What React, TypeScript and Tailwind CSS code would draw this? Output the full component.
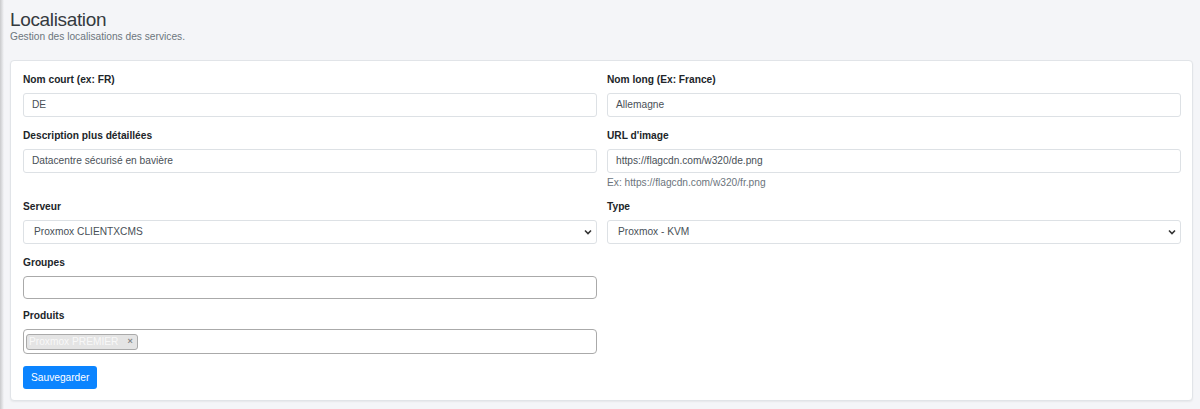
import type { ReactNode } from 'react'

function Label({ children }: { children: ReactNode }) {
  return <label className="block text-[10.2px] leading-[14px] font-bold text-[#212529] mb-[6px]">{children}</label>
}

function Input({ value }: { value: string }) {
  return (
    <div className="h-[24px] border border-[#dde1e5] rounded-[3px] bg-white px-[8px] flex items-center text-[10.2px] text-[#495057]">
      {value}
    </div>
  )
}

function Select({ value }: { value: string }) {
  return (
    <div className="h-[24px] border border-[#dde1e5] rounded-[3px] bg-white pl-[10px] pr-[4px] flex items-center justify-between text-[10.2px] text-[#495057]">
      <span>{value}</span>
      <svg width="8" height="6" viewBox="0 0 8 6" className="text-[#333]">
        <path d="M1 1.5 L4 4.5 L7 1.5" fill="none" stroke="currentColor" strokeWidth="1.6" />
      </svg>
    </div>
  )
}

export default function App() {
  return (
    <div className="min-h-[409px] bg-[#f4f5f8] flex font-['Liberation_Sans',Arial,sans-serif]">
      {/* sidebar shadow */}
      <div className="w-[4px] shrink-0 bg-linear-to-r from-[#c9cacc] to-[#f4f5f8]" />

      <main className="flex-1 pl-[6px] pr-[7px]">
        <div className="pt-[9px]">
          <h1 className="text-[19px] leading-[21px] tracking-[-0.35px] text-[#343a40]">Localisation</h1>
          <p className="text-[10.2px] leading-[13px] text-[#6c757d]">Gestion des localisations des services.</p>
        </div>

        <div className="mt-[17px] bg-white border border-[#e1e4e8] rounded-[4px] shadow-[0_1px_2px_rgba(0,0,0,0.06)] pt-[12px] pb-[11px] pl-[12px] pr-[11px]">
          <div className="grid grid-cols-2 gap-x-[10px]">
            <div className="mb-[12px]">
              <Label>Nom court (ex: FR)</Label>
              <Input value="DE" />
            </div>
            <div className="mb-[12px]">
              <Label>Nom long (Ex: France)</Label>
              <Input value="Allemagne" />
            </div>

            <div className="mb-[12px]">
              <Label>Description plus détaillées</Label>
              <Input value="Datacentre sécurisé en bavière" />
            </div>
            <div className="mb-[11px]">
              <Label>URL d'image</Label>
              <Input value="https://flagcdn.com/w320/de.png" />
              <p className="mt-[4px] text-[10.2px] leading-[12px] text-[#6c757d]">Ex: https://flagcdn.com/w320/fr.png</p>
            </div>

            <div className="mb-[12px]">
              <Label>Serveur</Label>
              <Select value="Proxmox CLIENTXCMS" />
            </div>
            <div className="mb-[12px]">
              <Label>Type</Label>
              <Select value="Proxmox - KVM" />
            </div>

            <div className="mb-[10px]">
              <Label>Groupes</Label>
              <div className="h-[23px] border border-[#aaaaaa] rounded-[4px] bg-white" />
            </div>
            <div />

            <div className="mb-[10px]">
              <Label>Produits</Label>
              <div className="h-[25px] border border-[#aaaaaa] rounded-[4px] bg-white pl-[2px] flex items-center">
                <span className="h-[16px] flex items-center bg-[#e4e4e4] border border-[#aaaaaa] rounded-[3px] pl-[2px] pr-[4px] text-[10.2px] text-[#f8f8f8]">
                  Proxmox PREMIER
                  <span className="ml-[9px] text-[9px] font-bold text-[#888]">×</span>
                </span>
              </div>
            </div>
            <div />
          </div>

          <button className="h-[23px] px-[8px] rounded-[3px] bg-[#0b84ff] text-white text-[10.2px]">Sauvegarder</button>
        </div>
      </main>
    </div>
  )
}
